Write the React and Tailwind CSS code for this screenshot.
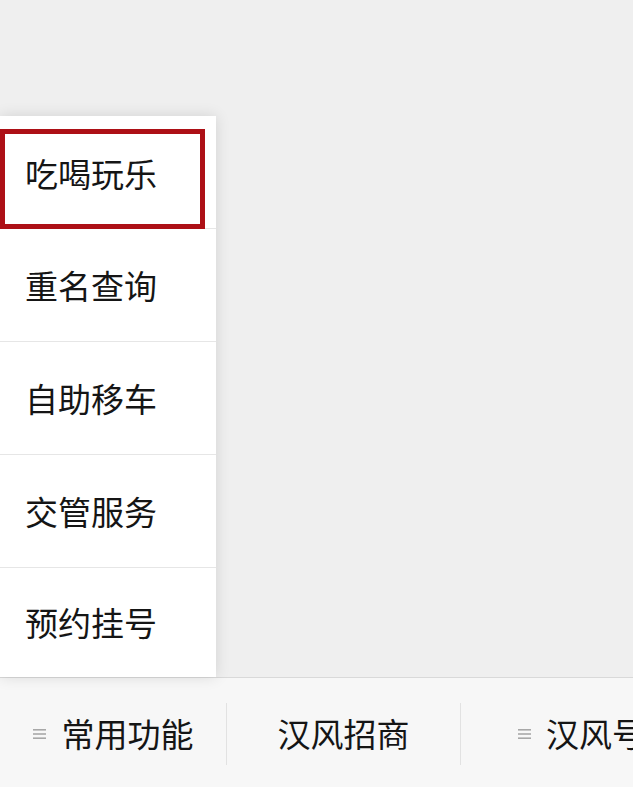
import React from "react";

const font = { fontFamily: '"Noto Sans CJK SC", "Noto Sans", sans-serif' };

function MenuIcon() {
  return (
    <svg width="13" height="12" viewBox="0 0 13 12" className="shrink-0">
      <rect x="0" y="1" width="13" height="1.6" fill="#a8a8a8" />
      <rect x="0" y="5.2" width="13" height="1.6" fill="#a8a8a8" />
      <rect x="0" y="9.4" width="13" height="1.6" fill="#a8a8a8" />
    </svg>
  );
}

const items = ["吃喝玩乐", "重名查询", "自助移车", "交管服务", "预约挂号"];

export default function App() {
  return (
    <div
      className="w-[633px] h-[787px] bg-[#efefef] flex flex-col overflow-hidden text-[#151515]"
      style={font}
    >
      <div className="flex-1 pt-[116px] relative z-10">
        <div className="w-[216px] bg-white shadow-[0_0_14px_rgba(0,0,0,0.12)] flex flex-col">
          {items.map((t, i) => (
            <div
              key={t}
              className={`relative flex items-center pl-[25px] text-[33px] leading-none ${
                i < items.length - 1 ? "h-[113px] border-b border-[#e6e6e6]" : "h-[109px]"
              }`}
            >
              <span className={i === 0 ? "pt-[3px]" : ""}>{t}</span>
              {i === 0 && (
                <div className="absolute left-0 top-[13px] right-[11px] bottom-[-1px] border-[5px] border-[#ad1016]" />
              )}
            </div>
          ))}
        </div>
      </div>
      <div className="h-[112px] shrink-0 bg-[#f7f7f7] border-t border-[#d9d9d9] flex items-center">
        <div className="w-[227px] shrink-0 h-[62px] flex items-center justify-center gap-[16px] border-r border-[#e2e2e2]">
          <MenuIcon />
          <span className="text-[33px] leading-none">常用功能</span>
        </div>
        <div className="w-[234px] shrink-0 h-[62px] flex items-center justify-center border-r border-[#e2e2e2]">
          <span className="text-[33px] leading-none">汉风招商</span>
        </div>
        <div className="w-[234px] shrink-0 h-[62px] flex items-center pl-[57px] gap-[15px]">
          <MenuIcon />
          <span className="text-[33px] leading-none whitespace-nowrap">汉风号</span>
        </div>
      </div>
    </div>
  );
}
